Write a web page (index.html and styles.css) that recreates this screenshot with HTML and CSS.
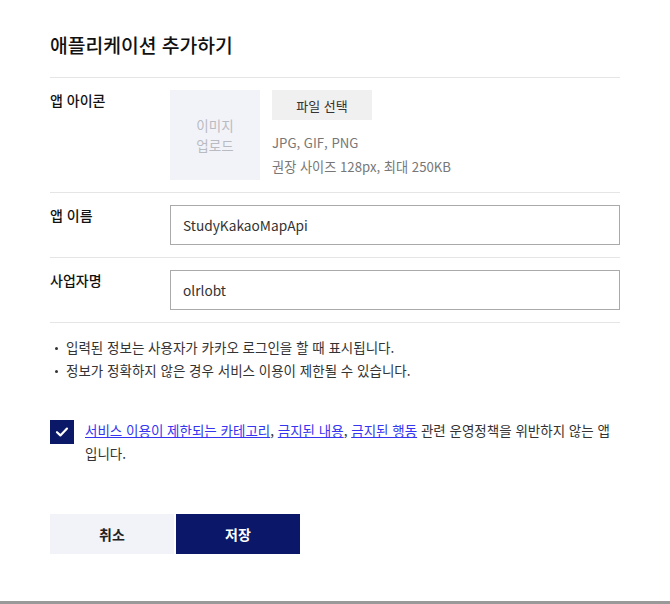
FILE: index.html
```html
<!DOCTYPE html>
<html lang="ko">
<head>
<meta charset="utf-8">
<link rel="stylesheet" href="styles.css">
</head>
<body>
<div class="page">
  <div class="modal">
    <h1 class="title">애플리케이션 추가하기</h1>
    <div class="row">
      <div class="label">앱 아이콘</div>
      <div class="icon-field">
        <div class="icon-box">이미지<br>업로드</div>
        <div class="icon-info">
          <button class="file-btn" type="button">파일 선택</button>
          <div class="hint">JPG, GIF, PNG</div>
          <div class="hint">권장 사이즈 128px, 최대 250KB</div>
        </div>
      </div>
    </div>
    <div class="row">
      <div class="label">앱 이름</div>
      <div class="input">StudyKakaoMapApi</div>
    </div>
    <div class="row">
      <div class="label">사업자명</div>
      <div class="input">olrlobt</div>
    </div>
    <ul class="notes">
      <li>입력된 정보는 사용자가 카카오 로그인을 할 때 표시됩니다.</li>
      <li>정보가 정확하지 않은 경우 서비스 이용이 제한될 수 있습니다.</li>
    </ul>
    <div class="agree">
      <span class="check">
        <svg width="14" height="12" viewBox="0 0 14 12"><path d="M2 6.2 L5.4 9.4 L12 2.6" fill="none" stroke="#fff" stroke-width="2.2" stroke-linecap="round" stroke-linejoin="round"/></svg>
      </span>
      <p class="agree-text"><a href="#">서비스 이용이 제한되는 카테고리</a>, <a href="#">금지된 내용</a>, <a href="#">금지된 행동</a> 관련 운영정책을 위반하지 않는 앱 입니다.</p>
    </div>
    <div class="actions">
      <button class="btn cancel" type="button">취소</button>
      <button class="btn save" type="button">저장</button>
    </div>
  </div>
  <div class="bottom-bar"></div>
</div>
</body>
</html>
```
FILE: styles.css
```css
* { box-sizing: border-box; }
html, body { margin: 0; padding: 0; background: #fff; }
body {
  font-family: "Noto Sans CJK KR", "Noto Sans", sans-serif;
  color: #222;
  width: 670px;
  height: 604px;
  overflow: hidden;
}
.page {
  height: 604px;
  display: flex;
  flex-direction: column;
}
.modal {
  flex: 1;
  padding: 0 50px;
  width: 670px;
}
.title {
  margin: 0;
  padding: 33px 0 19px;
  font-size: 19.3px;
  line-height: 25px;
  font-weight: 500;
  color: #111;
  border-bottom: 1px solid #e5e5e5;
  width: 570px;
}
.row {
  width: 570px;
  display: flex;
  padding: 12px 0 12px;
  border-bottom: 1px solid #e5e5e5;
}
.label {
  width: 120px;
  font-size: 14px;
  line-height: 22px;
  font-weight: 500;
  color: #111;
  flex-shrink: 0;
  margin-top: -1px;
}
.icon-field {
  display: flex;
  gap: 12px;
}
.icon-box {
  width: 90px;
  height: 90px;
  background: #f2f3f8;
  color: #b9bbc2;
  font-size: 13.5px;
  line-height: 20px;
  display: flex;
  align-items: center;
  justify-content: center;
  text-align: center;
}
.icon-info {
  display: flex;
  flex-direction: column;
  align-items: flex-start;
}
.file-btn {
  width: 100px;
  height: 30px;
  border: 0;
  background: #f0f0f0;
  color: #333;
  font-family: inherit;
  font-size: 13px;
  padding: 0;
  margin-bottom: 11px;
}
.hint {
  font-size: 13.2px;
  line-height: 24px;
  color: #777;
}
.input {
  width: 450px;
  height: 40px;
  border: 1px solid #aaa;
  padding: 0 12px;
  font-size: 13.7px;
  line-height: 38px;
  color: #333;
}
.notes {
  list-style: none;
  margin: 0;
  padding: 13px 0 0;
}
.notes li {
  position: relative;
  padding-left: 16px;
  font-size: 13.5px;
  line-height: 23px;
  color: #333;
}
.notes li::before {
  content: "";
  position: absolute;
  left: 5px;
  top: 11px;
  width: 3px;
  height: 3px;
  background: #333;
  border-radius: 50%;
}
.agree {
  display: flex;
  gap: 11px;
  align-items: flex-start;
  margin-top: 37px;
  width: 570px;
}
.check {
  width: 24px;
  height: 24px;
  background: #0b1767;
  display: flex;
  align-items: center;
  justify-content: center;
  flex-shrink: 0;
  margin-top: 1px;
}
.agree-text {
  margin: 0;
  font-size: 13.5px;
  line-height: 23px;
  color: #333;
  width: 530px;
  word-break: keep-all;
}
.agree-text a {
  color: #3535f0;
  text-decoration: underline;
}
.actions {
  display: flex;
  gap: 2px;
  margin-top: 49px;
}
.btn {
  width: 124px;
  height: 40px;
  border: 0;
  font-family: inherit;
  font-size: 14px;
  font-weight: 700;
  padding: 0;
}
.cancel {
  background: #f2f3f8;
  color: #222;
}
.save {
  background: #0b1869;
  color: #fff;
}
.bottom-bar {
  height: 3px;
  background: #999;
  flex-shrink: 0;
}
```
